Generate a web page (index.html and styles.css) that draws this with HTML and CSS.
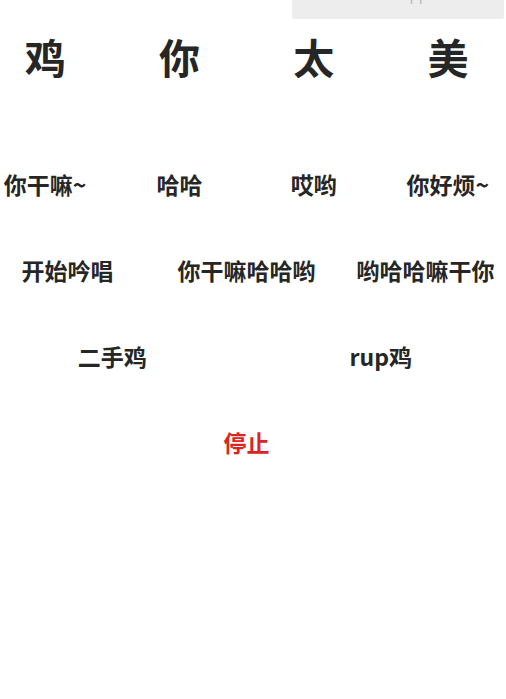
FILE: index.html
```html
<!DOCTYPE html>
<html lang="zh">
<head>
<meta charset="utf-8">
<link rel="stylesheet" href="styles.css">
</head>
<body>
<div class="badge"><span class="badge-text">Made with Applet</span></div>
<div class="page">
  <div class="row title">
    <span>鸡</span><span>你</span><span>太</span><span>美</span>
  </div>
  <div class="row four first">
    <span>你干嘛~</span><span>哈哈</span><span>哎哟</span><span>你好烦~</span>
  </div>
  <div class="row three">
    <span>开始吟唱</span><span>你干嘛哈哈哟</span><span>哟哈哈嘛干你</span>
  </div>
  <div class="row two">
    <span>二手鸡</span><span>rup鸡</span>
  </div>
  <div class="row one">
    <span class="stop">停止</span>
  </div>
</div>
</body>
</html>
```

FILE: styles.css
```css
html, body {
  margin: 0;
  padding: 0;
  background: #ffffff;
  overflow: hidden;
}
body {
  width: 506px;
  height: 699px;
  position: relative;
  font-family: "Noto Sans CJK SC", "Noto Sans", sans-serif;
  color: #262626;
}
.badge {
  position: absolute;
  top: 0;
  left: 292px;
  width: 212px;
  height: 19px;
  background: #ededed;
  border-radius: 0 0 2px 2px;
  overflow: hidden;
}
.badge-text {
  position: absolute;
  left: 30px;
  top: -16px;
  font-size: 15px;
  color: #b8b8b8;
  white-space: nowrap;
  font-family: "Noto Sans", sans-serif;
}
.page {
  margin-left: -22px;
  width: 537px;
  padding-top: 27px;
}
.row {
  display: grid;
  align-items: center;
  justify-items: center;
  height: 86px;
  font-weight: 700;
  font-size: 23px;
}
.row span {
  white-space: nowrap;
  line-height: 1;
}
.title {
  grid-template-columns: repeat(4, 1fr);
  height: 58px;
  font-size: 41px;
}
.four {
  grid-template-columns: repeat(4, 1fr);
}
.first {
  margin-top: 56px;
}
.three {
  grid-template-columns: repeat(3, 1fr);
}
.two {
  grid-template-columns: repeat(2, 1fr);
}
.one {
  grid-template-columns: 1fr;
}
.stop {
  color: #dc2424;
}
```
